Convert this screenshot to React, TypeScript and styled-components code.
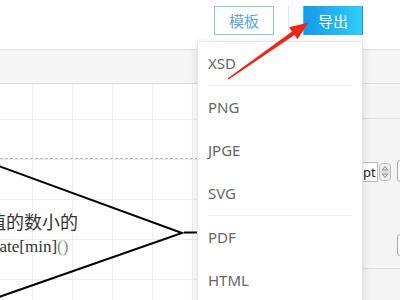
import React from "react";
import styled, { createGlobalStyle } from "styled-components";

const GlobalStyle = createGlobalStyle`
    html, body {
        margin: 0;
        padding: 0;
        width: 400px;
        height: 300px;
        overflow: hidden;
        background: #fff;
        font-family: "Noto Sans", "Noto Sans CJK SC", sans-serif;
    }
`;

const Page = styled.div`
    position: relative;
    width: 400px;
    height: 300px;
    overflow: hidden;
    display: flex;
    flex-direction: column;
`;

const Header = styled.div`
    height: 50px;
    flex-shrink: 0;
    border-bottom: 1px solid #e3e3e3;
    display: flex;
    justify-content: flex-end;
    align-items: flex-start;
    padding: 6px 37px 0 0;
    box-sizing: border-box;
`;

const Button = styled.button<{ $primary?: boolean }>`
    width: 60px;
    height: 29px;
    box-sizing: border-box;
    font-family: "Noto Sans CJK SC", sans-serif;
    font-size: 15px;
    cursor: pointer;
    border: 1px solid ${({ $primary }) => ($primary ? "transparent" : "#86c8e4")};
    background: ${({ $primary }) =>
        $primary ? "linear-gradient(90deg, #1599ee 0%, #2fcdf6 100%)" : "#fff"};
    color: ${({ $primary }) => ($primary ? "#fff" : "#5ba7d4")};
    padding: 0;
`;

const Divider = styled.span`
    width: 1px;
    height: 26px;
    margin: 0 14px 0 14px;
    background: #e6e6e6;
`;

const Toolbar = styled.div`
    height: 33px;
    flex-shrink: 0;
    background: #f5f5f5;
    border-bottom: 1px solid #dcdcdc;
`;

const Body = styled.div`
    flex: 1;
    display: flex;
`;

const Canvas = styled.div`
    position: relative;
    flex: 1;
    overflow: hidden;
    background-color: #fff;
    background-image: linear-gradient(90deg, #ececec 1px, transparent 1px),
        linear-gradient(180deg, #ececec 1px, transparent 1px);
    background-size: 40px 40px;
    background-position: 32px 35px;
`;

const PageBreak = styled.div`
    position: absolute;
    left: 0;
    right: 0;
    top: 74px;
    border-top: 1px dashed #b8b8b8;
`;

const Node = styled.svg`
    position: absolute;
    left: 0;
    top: 0;
`;

const NodeText = styled.div`
    position: absolute;
    left: -12px;
    top: 125px;
    color: #333;
    white-space: nowrap;
`;

const NodeTitle = styled.div`
    font-family: "Noto Sans CJK SC", sans-serif;
    font-size: 18px;
    line-height: 24px;
`;

const NodeCode = styled.div`
    font-family: "Liberation Serif", serif;
    font-size: 17px;
    line-height: 22px;
    margin-top: 3px;
    margin-left: 3px;
    span {
        color: #888;
    }
`;

const Side = styled.div`
    width: 37px;
    flex-shrink: 0;
    background: #f4f4f4;
    display: flex;
    flex-direction: column;
`;

const SideTabs = styled.div`
    height: 34px;
    border-bottom: 1px solid #dedede;
`;

const SideBody = styled.div`
    height: 149px;
    border-bottom: 1px solid #dedede;
    position: relative;
`;

const SizeRow = styled.div`
    display: flex;
    align-items: center;
    margin-top: 43px;
`;

const SizeInput = styled.div`
    width: 15px;
    height: 20px;
    box-sizing: border-box;
    background: #fff;
    border: 1px solid #bbb;
    border-left: none;
    font-size: 13px;
    line-height: 18px;
    color: #222;
`;

const Spinner = styled.svg`
    margin-left: 1px;
`;

const EdgeBox = styled.div<{ $top: number }>`
    position: absolute;
    left: 34px;
    top: ${({ $top }) => $top}px;
    width: 12px;
    height: 20px;
    border: 1px solid #aaa;
    border-radius: 3px;
    background: #fafafa;
`;

const Menu = styled.div`
    position: absolute;
    left: 197px;
    top: 41px;
    width: 166px;
    background: #fff;
    border: 1px solid #e6e6e6;
    box-shadow: 0 2px 8px rgba(0, 0, 0, 0.12);
    box-sizing: border-box;
`;

const MenuItem = styled.div`
    height: 43px;
    line-height: 43px;
    padding-left: 10px;
    font-size: 15px;
    color: #666;
`;

const MenuSep = styled.div`
    height: 1px;
    margin: 0 10px;
    background: #ececec;
`;

const Arrow = styled.svg`
    position: absolute;
    left: 0;
    top: 0;
    pointer-events: none;
`;

const App: React.FC = () => {
    return (
        <Page>
            <GlobalStyle />
            <Header>
                <Button>模板</Button>
                <Divider />
                <Button $primary>导出</Button>
            </Header>
            <Toolbar />
            <Body>
                <Canvas>
                    <PageBreak />
                    <Node width="200" height="215">
                        <polyline
                            points="-4,81 182,149 -4,214"
                            fill="none"
                            stroke="#000"
                            strokeWidth="2"
                        />
                        <line x1="184" y1="148.5" x2="197" y2="148.5" stroke="#000" strokeWidth="2" />
                    </Node>
                    <NodeText>
                        <NodeTitle>值的数小的</NodeTitle>
                        <NodeCode>
                            date[min]<span>()</span>
                        </NodeCode>
                    </NodeText>
                </Canvas>
                <Side>
                    <SideTabs />
                    <SideBody>
                        <SizeRow>
                            <SizeInput>pt</SizeInput>
                            <Spinner width="12" height="18" viewBox="0 0 12 18">
                                <rect x="0.5" y="0.5" width="11" height="17" rx="3" fill="#f0f0f0" stroke="#bbb" />
                                <path d="M3 7 L6 3.5 L9 7 Z" fill="none" stroke="#888" />
                                <path d="M3 11 L6 14.5 L9 11 Z" fill="none" stroke="#888" />
                                <line x1="1" y1="9" x2="11" y2="9" stroke="#ccc" />
                            </Spinner>
                        </SizeRow>
                        <EdgeBox $top={41} />
                        <EdgeBox $top={115} />
                    </SideBody>
                </Side>
            </Body>
            <Menu>
                <MenuItem>XSD</MenuItem>
                <MenuSep />
                <MenuItem>PNG</MenuItem>
                <MenuItem>JPGE</MenuItem>
                <MenuItem>SVG</MenuItem>
                <MenuSep />
                <MenuItem>PDF</MenuItem>
                <MenuItem>HTML</MenuItem>
            </Menu>
            <Arrow width="400" height="300">
                <polygon
                    points="227.5,78.5 292,31.5 289,27.3 308.5,22.5 297.5,39.2 294.6,35.1 228.6,79.5"
                    fill="#e8281d"
                />
            </Arrow>
        </Page>
    );
};

export default App;
